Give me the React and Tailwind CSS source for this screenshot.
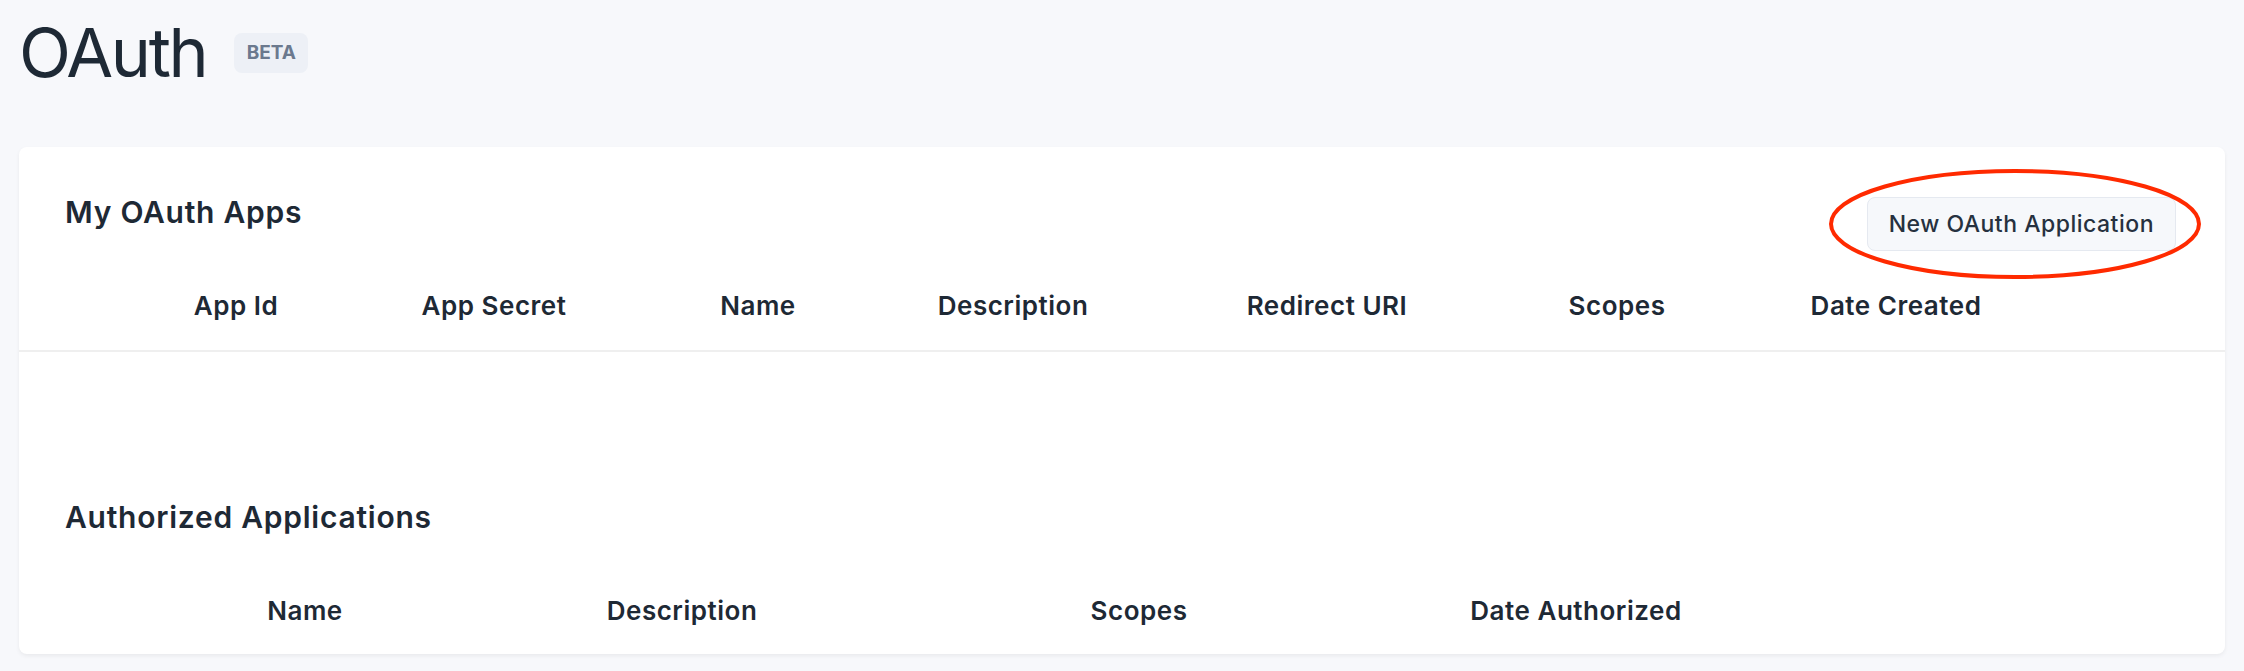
import React from 'react';

const appColumns = ['App Id', 'App Secret', 'Name', 'Description', 'Redirect URI', 'Scopes', 'Date Created'];
const authColumns = ['Name', 'Description', 'Scopes', 'Date Authorized'];

const App = () => {
  return (
    <div
      className="min-h-screen bg-[#f7f8fb] px-[19px] pb-[18px] text-[#1e2935]"
      style={{ fontFamily: 'Inter, "Noto Sans", sans-serif' }}
    >
      {/* page title */}
      <div className="flex items-center pt-[18px]">
        <h1 className="text-[68px] font-normal leading-[68px] tracking-[-0.035em]">OAuth</h1>
        <span className="ml-[28px] mt-[2px] flex h-[40px] w-[74px] items-center justify-center rounded-lg bg-[#edf0f6] text-[19px] font-bold text-[#6b798e]">
          BETA
        </span>
      </div>

      {/* card */}
      <div className="mt-[61px] rounded-lg bg-white shadow-[0_2px_4px_rgba(0,0,0,0.06)]">
        {/* my apps */}
        <div className="flex items-start justify-between pl-[46px] pr-[49px] pt-[50px]">
          <h2 className="text-[30px] font-semibold leading-[30px] tracking-[0.025em]">My OAuth Apps</h2>
          <div className="relative">
            <button className="h-[54px] rounded-lg border border-[#e5e9f0] bg-[#f6f8fb] px-[21px] text-[23px] font-medium tracking-[0.022em] text-[#26313f]">
              New OAuth Application
            </button>
            <svg
              className="pointer-events-none absolute left-[-39px] top-[-29px]"
              width="374"
              height="112"
              viewBox="0 0 374 112"
            >
              <ellipse cx="187" cy="56" rx="184" ry="53" fill="none" stroke="#ff2a00" strokeWidth="4" />
            </svg>
          </div>
        </div>

        <div className="mt-[42px] grid grid-cols-[234px_282px_246px_264px_364px_216px_342px] border-b-2 border-[#efefef] pb-[31px] pl-[100px]">
          {appColumns.map((c) => (
            <div key={c} className="text-center text-[26px] font-semibold leading-[26px] tracking-[0.02em]">
              {c}
            </div>
          ))}
        </div>

        {/* authorized */}
        <div className="pl-[46px] pt-[150px]">
          <h2 className="text-[30px] font-semibold leading-[30px] tracking-[0.025em]">Authorized Applications</h2>
        </div>
        <div className="mt-[66px] grid grid-cols-[338px_416px_498px_376px] pb-[30px] pl-[117px]">
          {authColumns.map((c) => (
            <div key={c} className="text-center text-[26px] font-semibold leading-[26px] tracking-[0.02em]">
              {c}
            </div>
          ))}
        </div>
      </div>
    </div>
  );
};

export default App;
